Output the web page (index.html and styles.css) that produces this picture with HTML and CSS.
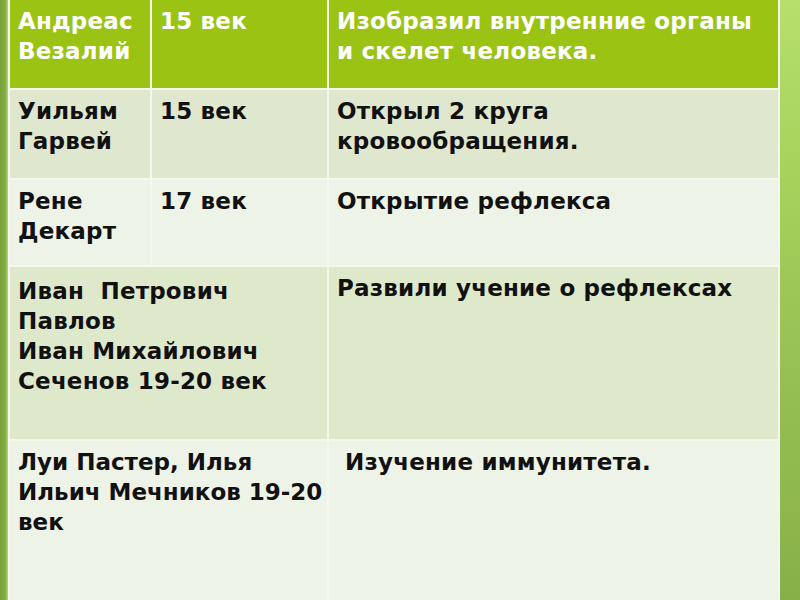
FILE: index.html
```html
<!DOCTYPE html>
<html lang="ru">
<head>
<meta charset="utf-8">
<link rel="stylesheet" href="styles.css">
</head>
<body>
<div class="slide">
  <div class="edge-left"></div>
  <table class="grid">
    <colgroup><col class="c1"><col class="c2"><col class="c3"></colgroup>
    <tr class="head">
      <td>Андреас Везалий</td>
      <td>15 век</td>
      <td>Изобразил внутренние органы и скелет человека.</td>
    </tr>
    <tr class="r2">
      <td>Уильям Гарвей</td>
      <td>15 век</td>
      <td>Открыл 2 круга кровообращения.</td>
    </tr>
    <tr class="r3">
      <td>Рене Декарт</td>
      <td>17 век</td>
      <td>Открытие рефлекса</td>
    </tr>
    <tr class="r4">
      <td colspan="2">Иван&nbsp; Петрович Павлов<br>Иван Михайлович Сеченов <span class="nw">19-20</span> век</td>
      <td>Развили учение о рефлексах</td>
    </tr>
    <tr class="r5">
      <td colspan="2" class="tight">Луи Пастер, Илья Ильич Мечников <span class="nw">19-20</span> век</td>
      <td class="indent">Изучение иммунитета.</td>
    </tr>
  </table>
  <div class="edge-right"></div>
</div>
</body>
</html>
```
FILE: styles.css
```css
html, body {
  margin: 0;
  padding: 0;
}
body {
  width: 800px;
  height: 600px;
  overflow: hidden;
  background: #8cb548;
  font-family: "DejaVu Sans", sans-serif;
}
.slide {
  display: flex;
  width: 800px;
  height: 600px;
}
.edge-left {
  width: 8px;
  flex: none;
  background: linear-gradient(90deg, #78a23a 0%, #86b043 70%, #b9d890 100%);
}
.edge-right {
  flex: 1;
  background: linear-gradient(180deg, #b6df6c 0%, #a6d25c 30%, #97c153 60%, #88b049 100%);
  border-left: 2px solid #f4f8ec;
}
.grid {
  width: 769px;
  height: 600px;
  flex: none;
  border-collapse: collapse;
  table-layout: fixed;
  border-left: 2px solid #f4f8ec;
}
.c1 { width: 142px; }
.c2 { width: 177px; }
.c3 { width: 450px; }
.grid td {
  vertical-align: top;
  padding: 6px 6px 0 8px;
  font-size: 23px;
  font-weight: bold;
  letter-spacing: 0.2px;
  line-height: 30px;
  color: #111;
  border: 2px solid #f4f8ec;
  border-top: none;
  border-left: none;
}
.grid td:last-child { border-right: none; }
.nw { white-space: nowrap; }
.head td {
  background: #9bc314;
  color: #fff;
  height: 82px;
}
.r2 td { background: #dfe7cf; height: 82px; }
.r3 td { background: #eef3e7; height: 79px; }
.r4 td { background: #dee8cb; height: 166px; }
.r4 td:first-child { padding-top: 9px; height: 163px; }
.r5 td { background: #eef3e7; border-bottom: none; }
.grid td.tight { letter-spacing: 0; padding-right: 2px; }
.indent { padding-left: 16px !important; }
```
